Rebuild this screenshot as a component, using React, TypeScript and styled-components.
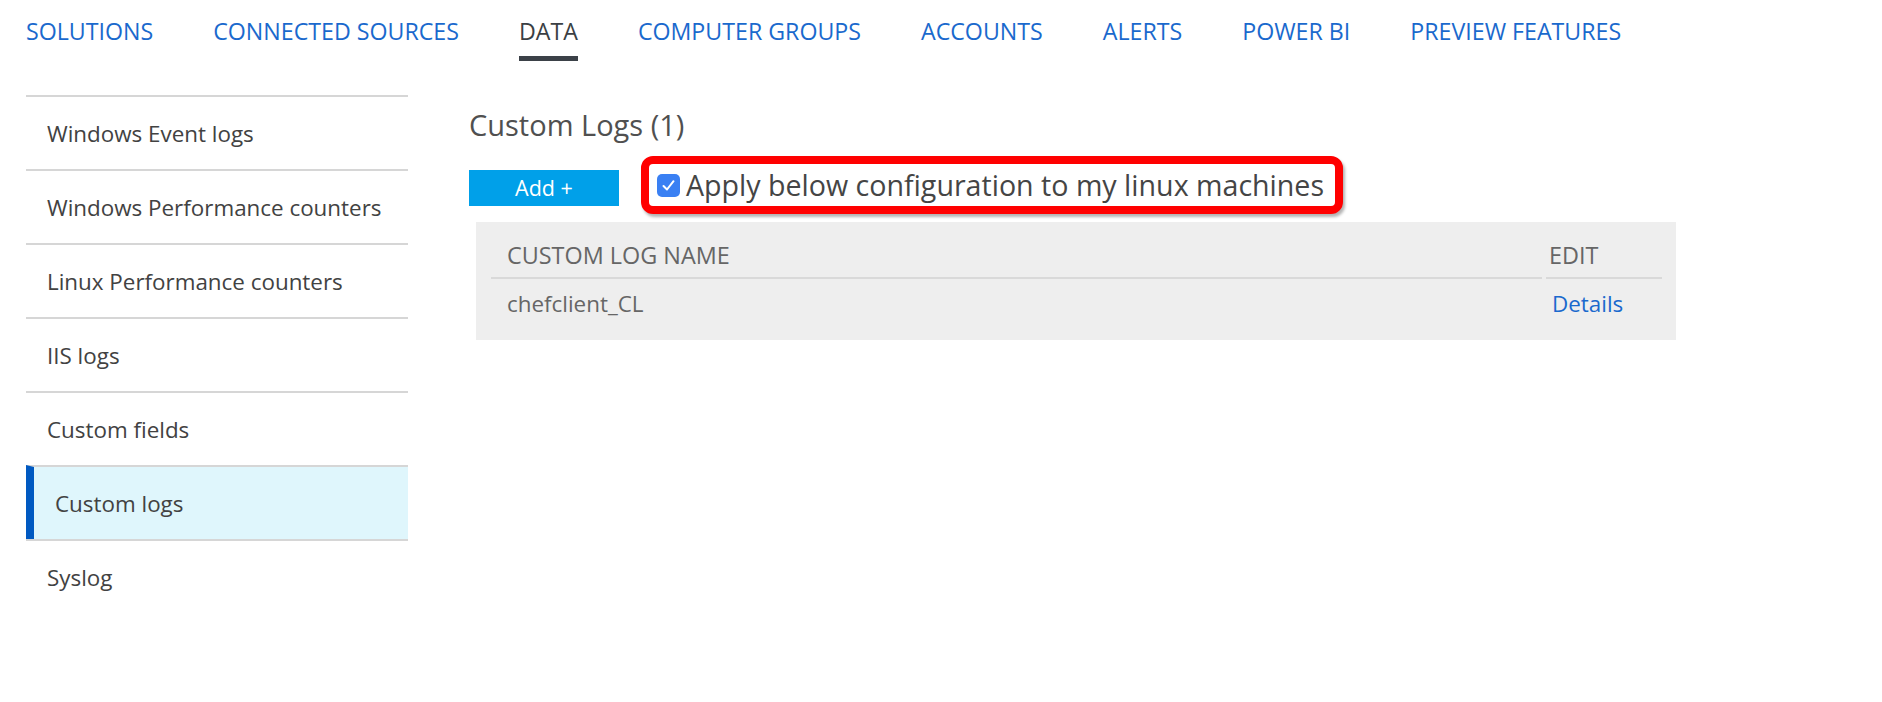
import React from "react";
import styled, { createGlobalStyle } from "styled-components";

const GlobalStyle = createGlobalStyle`
  html, body {
    margin: 0;
    padding: 0;
    background: #ffffff;
  }
  body {
    font-family: "Open Sans", "Noto Sans", "Liberation Sans", sans-serif;
    color: #444444;
  }
  * { box-sizing: border-box; }
`;

const Page = styled.div`
  padding-left: 26px;
  width: 1882px;
  height: 702px;
  overflow: hidden;
`;

const TopNav = styled.nav`
  display: flex;
  gap: 60px;
  padding-top: 14px;
`;

const NavItem = styled.a<{ $active?: boolean }>`
  display: block;
  font-size: 23.2px;
  line-height: 34px;
  padding-bottom: 8px;
  border-bottom: 5px solid ${(p) => (p.$active ? "#3b4148" : "transparent")};
  color: ${(p) => (p.$active ? "#3b3f44" : "#1a69cd")};
  text-decoration: none;
  white-space: nowrap;
`;

const Body = styled.div`
  display: flex;
  align-items: flex-start;
  margin-top: 34px;
`;

const Sidebar = styled.ul`
  list-style: none;
  margin: 0;
  padding: 0;
  width: 382px;
  flex: 0 0 382px;
`;

const SideItem = styled.li<{ $active?: boolean }>`
  border-top: 2px solid #d6d6d6;
  border-left: ${(p) => (p.$active ? "8px solid #0059c1" : "0")};
  background: ${(p) => (p.$active ? "#dff6fc" : "transparent")};
  padding: 3px 0 1px 21px;
  font-size: 22.4px;
  line-height: 68px;
  color: #424242;
  white-space: nowrap;
`;

const Main = styled.main`
  margin-left: 61px;
  display: flex;
  flex-direction: column;
`;

const Title = styled.h2`
  margin: 10px 0 0 0;
  font-weight: 400;
  font-size: 29px;
  line-height: 40px;
  color: #505050;
`;

const Controls = styled.div`
  display: flex;
  align-items: flex-start;
  margin-top: 11px;
`;

const AddButton = styled.button`
  margin-top: 14px;
  width: 150px;
  height: 36px;
  border: none;
  background: #00a0e9;
  color: #ffffff;
  font-family: inherit;
  font-size: 21.5px;
  line-height: 36px;
  padding: 0;
  cursor: pointer;
`;

const Highlight = styled.label`
  margin-left: 22px;
  display: flex;
  align-items: center;
  height: 58px;
  border: 8px solid #ff0000;
  border-radius: 12px;
  padding: 0 11px 0 8px;
  box-shadow: 2px 3px 3px rgba(0, 0, 0, 0.3);
  background: #ffffff;
`;

const CheckBox = styled.span`
  width: 23px;
  height: 23px;
  border-radius: 5px;
  background: #3a80f3;
  display: flex;
  align-items: center;
  justify-content: center;
  flex: 0 0 23px;
`;

const LabelText = styled.span`
  margin-left: 6px;
  font-size: 28.6px;
  line-height: 42px;
  color: #454545;
  white-space: nowrap;
`;

const TablePanel = styled.div`
  margin-top: 8px;
  margin-left: 7px;
  width: 1200px;
  background: #eeeeee;
  padding: 0 14px 0 15px;
  display: grid;
  grid-template-columns: 1051px 116px;
  column-gap: 4px;
`;

const HeaderCell = styled.div<{ $pad: number }>`
  padding: 18px 0 7px ${(p) => p.$pad}px;
  font-size: 23.4px;
  line-height: 30px;
  color: #666666;
  text-transform: uppercase;
  border-bottom: 2px solid #d9d9d9;
  white-space: nowrap;
`;

const Cell = styled.div<{ $pad: number }>`
  padding: 10px 0 21px ${(p) => p.$pad}px;
  font-size: 22.4px;
  line-height: 30px;
  color: #666666;
  white-space: nowrap;
`;

const DetailsLink = styled.a`
  color: #1a69cd;
  text-decoration: none;
`;

const navItems = [
  "SOLUTIONS",
  "CONNECTED SOURCES",
  "DATA",
  "COMPUTER GROUPS",
  "ACCOUNTS",
  "ALERTS",
  "POWER BI",
  "PREVIEW FEATURES",
];

const sideItems = [
  "Windows Event logs",
  "Windows Performance counters",
  "Linux Performance counters",
  "IIS logs",
  "Custom fields",
  "Custom logs",
  "Syslog",
];

export default function App() {
  return (
    <>
      <GlobalStyle />
      <Page>
        <TopNav>
          {navItems.map((n) => (
            <NavItem key={n} $active={n === "DATA"}>
              {n}
            </NavItem>
          ))}
        </TopNav>
        <Body>
          <Sidebar>
            {sideItems.map((s) => (
              <SideItem key={s} $active={s === "Custom logs"}>
                {s}
              </SideItem>
            ))}
          </Sidebar>
          <Main>
            <Title>Custom Logs (1)</Title>
            <Controls>
              <AddButton>Add +</AddButton>
              <Highlight>
                <CheckBox>
                  <svg width="17" height="17" viewBox="0 0 17 17">
                    <path
                      d="M3.5 9 L7 12.5 L13.5 4.2"
                      fill="none"
                      stroke="#ffffff"
                      strokeWidth="2"
                      strokeLinecap="round"
                      strokeLinejoin="round"
                    />
                  </svg>
                </CheckBox>
                <LabelText>Apply below configuration to my linux machines</LabelText>
              </Highlight>
            </Controls>
            <TablePanel>
              <HeaderCell $pad={16}>Custom Log Name</HeaderCell>
              <HeaderCell $pad={3}>Edit</HeaderCell>
              <Cell $pad={16}>chefclient_CL</Cell>
              <Cell $pad={6}>
                <DetailsLink>Details</DetailsLink>
              </Cell>
            </TablePanel>
          </Main>
        </Body>
      </Page>
    </>
  );
}
